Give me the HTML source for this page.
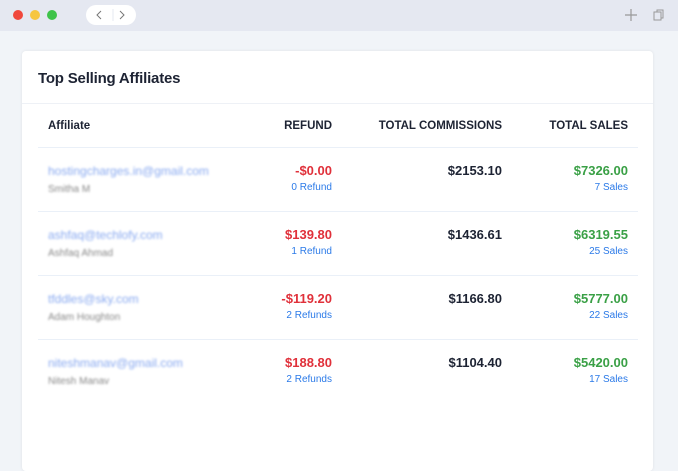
<!DOCTYPE html><html><head><style>
*{margin:0;padding:0;box-sizing:border-box}
body{width:678px;height:440px;overflow:hidden;background:#f1f4f8;font-family:"Liberation Sans",sans-serif;position:relative}
.top{position:absolute;left:0;top:0;width:678px;height:31px;background:#e5e8f1}
.dot{position:absolute;top:10px;width:10px;height:10px;border-radius:50%}
.nav{position:absolute;left:86px;top:5px;width:50px;height:20px;background:#fff;border-radius:10px}
.card{position:absolute;left:22px;top:51px;width:631px;height:420px;background:#fff;border-radius:4px;box-shadow:0 0 3px rgba(0,0,0,.08)}
.title{position:absolute;left:16px;top:19px;font-size:15px;color:#1d2333;font-weight:bold;letter-spacing:-0.2px}
.hl{position:absolute;left:0;top:52px;width:631px;height:1px;background:#eef1f6}
.t{position:absolute;white-space:nowrap}
.h{font-size:11.5px;font-weight:bold;color:#1d2333;top:69px}
.r{text-align:right}
.sep{position:absolute;left:16px;width:600px;height:1px;background:#eaf0f8}
.em{color:#8aaaf0;font-size:12px;filter:blur(1.1px)}
.nm{color:#888;font-size:10px;filter:blur(1px)}
.red{color:#e0303a;font-size:13px;font-weight:bold}
.blk{color:#1d2333;font-size:13px;font-weight:bold}
.grn{color:#3aa046;font-size:13px;font-weight:bold}
.sub{color:#2b7ae8;font-size:10px}
</style></head><body>
<div class="top">
<div class="dot" style="left:13px;background:#f0473c"></div>
<div class="dot" style="left:30px;background:#f6c640"></div>
<div class="dot" style="left:47px;background:#3fc34a"></div>
<div class="nav"><svg width="50" height="20"><path d="M27 4V16" stroke="#e5e8f1"/><path d="M15 6L11 10L15 14" stroke="#777" fill="none"/><path d="M34 6L38 10L34 14" stroke="#777" fill="none"/></svg></div>
<svg style="position:absolute;left:624px;top:8px" width="14" height="14"><path d="M7 1V13M1 7H13" stroke="#999" stroke-width="1.2"/></svg>
<svg style="position:absolute;left:652px;top:8px" width="14" height="14"><rect x="2" y="4" width="7" height="8" fill="none" stroke="#999"/><path d="M5 4V2H11V10H9" fill="none" stroke="#999"/></svg>
</div>
<div class="card">
<div class="title">Top Selling Affiliates</div>
<div class="hl"></div>
<div class="t h" style="left:26px">Affiliate</div>
<div class="t h r" style="right:321px">REFUND</div>
<div class="t h r" style="right:151px">TOTAL COMMISSIONS</div>
<div class="t h r" style="right:25px">TOTAL SALES</div>
<div class="sep" style="top:96px"></div>
<div class="sep" style="top:160px"></div>
<div class="sep" style="top:224px"></div>
<div class="sep" style="top:288px"></div>

<div class="t em" style="left:26px;top:113px">hostingcharges.in@gmail.com</div>
<div class="t nm" style="left:26px;top:133px">Smitha M</div>
<div class="t red r" style="right:321px;top:112px">-$0.00</div>
<div class="t sub r" style="right:321px;top:131px">0 Refund</div>
<div class="t blk r" style="right:151px;top:112px">$2153.10</div>
<div class="t grn r" style="right:25px;top:112px">$7326.00</div>
<div class="t sub r" style="right:25px;top:131px">7 Sales</div>

<div class="t em" style="left:26px;top:177px">ashfaq@techlofy.com</div>
<div class="t nm" style="left:26px;top:197px">Ashfaq Ahmad</div>
<div class="t red r" style="right:321px;top:176px">$139.80</div>
<div class="t sub r" style="right:321px;top:195px">1 Refund</div>
<div class="t blk r" style="right:151px;top:176px">$1436.61</div>
<div class="t grn r" style="right:25px;top:176px">$6319.55</div>
<div class="t sub r" style="right:25px;top:195px">25 Sales</div>

<div class="t em" style="left:26px;top:241px">tfddles@sky.com</div>
<div class="t nm" style="left:26px;top:261px">Adam Houghton</div>
<div class="t red r" style="right:321px;top:240px">-$119.20</div>
<div class="t sub r" style="right:321px;top:259px">2 Refunds</div>
<div class="t blk r" style="right:151px;top:240px">$1166.80</div>
<div class="t grn r" style="right:25px;top:240px">$5777.00</div>
<div class="t sub r" style="right:25px;top:259px">22 Sales</div>

<div class="t em" style="left:26px;top:305px">niteshmanav@gmail.com</div>
<div class="t nm" style="left:26px;top:325px">Nitesh Manav</div>
<div class="t red r" style="right:321px;top:304px">$188.80</div>
<div class="t sub r" style="right:321px;top:323px">2 Refunds</div>
<div class="t blk r" style="right:151px;top:304px">$1104.40</div>
<div class="t grn r" style="right:25px;top:304px">$5420.00</div>
<div class="t sub r" style="right:25px;top:323px">17 Sales</div>
</div>
</body></html>
